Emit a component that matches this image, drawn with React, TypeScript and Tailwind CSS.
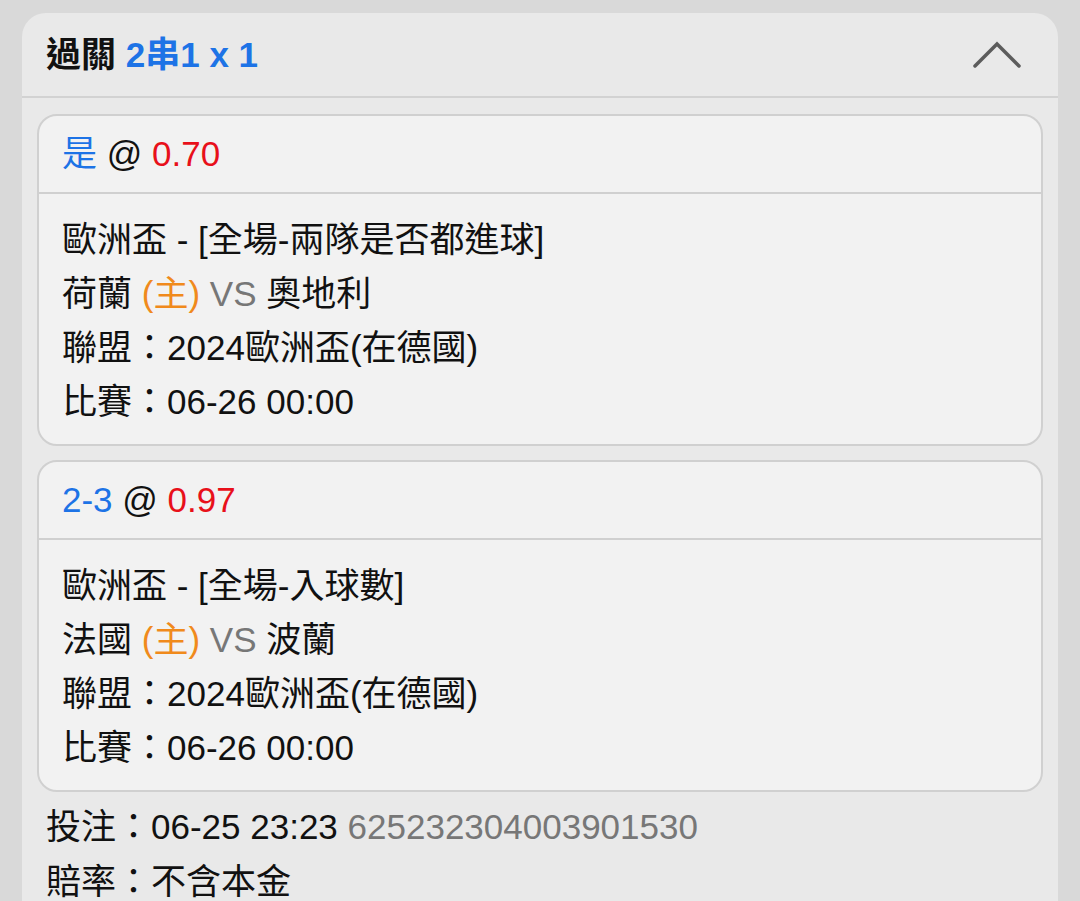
import React from "react";

const bets = [
  {
    pick: "是",
    odds: "0.70",
    market: "歐洲盃 - [全場-兩隊是否都進球]",
    home: "荷蘭",
    away: "奧地利",
    league: "2024歐洲盃(在德國)",
    time: "06-26 00:00",
  },
  {
    pick: "2-3",
    odds: "0.97",
    market: "歐洲盃 - [全場-入球數]",
    home: "法國",
    away: "波蘭",
    league: "2024歐洲盃(在德國)",
    time: "06-26 00:00",
  },
];

export default function App() {
  return (
    <div
      className="w-[1080px] h-[901px] overflow-hidden bg-[#d9d9d9] pt-[13px] px-[22px] text-[35px] text-[#111]"
      style={{ fontFamily: '"Liberation Sans", "Noto Sans CJK TC", sans-serif' }}
    >
      <div className="rounded-t-[24px] bg-[#e9e9e9] min-h-[900px]">
        {/* Header */}
        <div className="flex items-center justify-between h-[85px] pl-[24px] pr-[37px] border-b-2 border-[#d2d2d2]">
          <div className="font-bold leading-none text-[35px]">
            過關 <span className="text-[#1d73e6]">2串1 x 1</span>
          </div>
          <svg width="48" height="28" viewBox="0 0 48 28" fill="none">
            <path d="M2 25 L24 3 L46 25" stroke="#5c5c5c" strokeWidth="3.5" strokeLinecap="round" />
          </svg>
        </div>

        <div className="px-[15px] pt-[16px]">
          {bets.map((b, i) => (
            <div
              key={i}
              className="mb-[14px] rounded-[20px] border-2 border-[#d0d0d0] bg-[#f2f2f2]"
            >
              <div className="px-[23px] py-[11px] leading-[54px] border-b-2 border-[#d0d0d0]">
                <span className="text-[#1d73e6]">{b.pick}</span> @{" "}
                <span className="text-[#e8101a]">{b.odds}</span>
              </div>
              <div className="px-[23px] pt-[19px] pb-[15px] leading-[54px]">
                <div>{b.market}</div>
                <div>
                  {b.home} <span className="text-[#f08a1c]">(主)</span>{" "}
                  <span className="text-[#777]">VS</span> {b.away}
                </div>
                <div>聯盟：{b.league}</div>
                <div>比賽：{b.time}</div>
              </div>
            </div>
          ))}

          <div className="pl-[9px] -mt-[7px] leading-[55px]">
            <div>
              投注：06-25 23:23 <span className="text-[#777]">625232304003901530</span>
            </div>
            <div>賠率：不含本金</div>
          </div>
        </div>
      </div>
    </div>
  );
}
